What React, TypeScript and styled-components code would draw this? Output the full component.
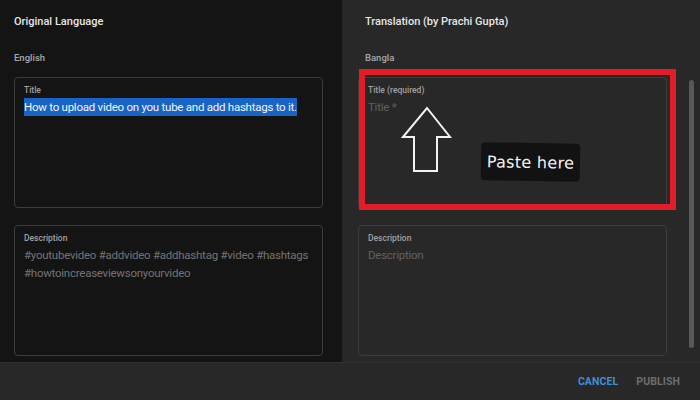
import React from 'react';
import styled, { createGlobalStyle } from 'styled-components';

/**
 * Global
 */
const GlobalStyle = createGlobalStyle`
    html, body {
        margin: 0;
        padding: 0;
        background: #282828;
    }
    body {
        font-family: Roboto, "Noto Sans", Arial, sans-serif;
    }
`;

/**
 * Styled Components
 */
const Page = styled.div`
    width: 700px;
    height: 400px;
    display: flex;
    flex-direction: column;
    overflow: hidden;
`;

const Body = styled.div`
    flex: 0 0 362px;
    display: flex;
`;

const Panel = styled.div<{ $bg: string; $width?: number }>`
    position: relative;
    ${(p) => (p.$width ? `flex: 0 0 ${p.$width}px;` : 'flex: 1;')}
    background: ${(p) => p.$bg};
    padding-left: ${(p) => (p.$width ? 14 : 16)}px;
    box-sizing: border-box;
    display: flex;
    flex-direction: column;
`;

const Heading = styled.div<{ $indent?: number }>`
    margin: 14px 0 0 ${(p) => p.$indent || 0}px;
    font-size: 11px;
    line-height: 16px;
    font-weight: 500;
    color: #e6e6e6;
`;

const Language = styled.div<{ $indent?: number }>`
    margin: 22px 0 0 ${(p) => p.$indent || 0}px;
    font-size: 9.5px;
    line-height: 12px;
    font-weight: 500;
    color: #a8a8a8;
`;

const Field = styled.div`
    width: 309px;
    height: 131px;
    margin-top: 13px;
    box-sizing: border-box;
    border: 1px solid #3c3c3c;
    border-radius: 4px;
    padding: 6px 9px;

    & + & {
        margin-top: 17px;
    }
`;

const FieldLabel = styled.div`
    font-size: 8.5px;
    line-height: 12px;
    font-weight: 500;
    color: #a0a0a0;
`;

const FieldText = styled.div<{ $muted?: boolean }>`
    margin-top: 2px;
    font-size: 11.5px;
    line-height: 18px;
    letter-spacing: -0.25px;
    color: ${(p) => (p.$muted ? '#616161' : '#737373')};
`;

const Selected = styled.span`
    background: #1763c6;
    color: #f4f4f4;
    padding: 2px 0;
`;

const ScrollThumb = styled.div`
    position: absolute;
    right: 6px;
    top: 80px;
    width: 5px;
    height: 268px;
    border-radius: 3px;
    background: #585858;
`;

const Highlight = styled.div`
    position: absolute;
    left: 17px;
    top: 69px;
    width: 317px;
    height: 141px;
    box-sizing: border-box;
    border: 6px solid #e41c28;
`;

const Arrow = styled.svg`
    position: absolute;
    left: 59px;
    top: 106px;
`;

const PasteTag = styled.div`
    position: absolute;
    left: 139px;
    top: 143px;
    width: 99px;
    height: 38px;
    border-radius: 4px;
    background: #121212;
    transform: rotate(1deg);
    display: flex;
    align-items: center;
    justify-content: center;
    font-family: "DejaVu Sans", sans-serif;
    font-size: 16px;
    color: #f2f2f2;
    letter-spacing: 0.3px;
`;

const Footer = styled.div`
    flex: 1;
    background: #282828;
    border-top: 1px solid #303030;
    display: flex;
    align-items: center;
    justify-content: flex-end;
    gap: 18px;
    padding-right: 20px;
`;

const Action = styled.div<{ $primary?: boolean }>`
    font-size: 10.5px;
    font-weight: 700;
    letter-spacing: 0.1px;
    color: ${(p) => (p.$primary ? '#3e8fd6' : '#6e6e6e')};
`;

/**
 * Main Component
 */
const App = () => {
    return (
        <Page>
            <GlobalStyle />
            <Body>
                <Panel $bg="#141414" $width={342}>
                    <Heading>Original Language</Heading>
                    <Language>English</Language>
                    <Field>
                        <FieldLabel>Title</FieldLabel>
                        <FieldText>
                            <Selected>How to upload video on you tube and add hashtags to it.</Selected>
                        </FieldText>
                    </Field>
                    <Field>
                        <FieldLabel>Description</FieldLabel>
                        <FieldText>
                            #youtubevideo #addvideo #addhashtag #video #hashtags
                            #howtoincreaseviewsonyourvideo
                        </FieldText>
                    </Field>
                </Panel>
                <Panel $bg="#282828">
                    <Heading $indent={7}>Translation (by Prachi Gupta)</Heading>
                    <Language $indent={7}>Bangla</Language>
                    <Field>
                        <FieldLabel>Title (required)</FieldLabel>
                        <FieldText $muted>Title *</FieldText>
                    </Field>
                    <Field>
                        <FieldLabel>Description</FieldLabel>
                        <FieldText $muted>Description</FieldText>
                    </Field>

                    <Highlight />
                    <Arrow width="52" height="68" viewBox="0 0 52 68">
                        <path
                            d="M26 2 L49 31 L36 31 L36 65 L13 65 L13 31 L2 31 Z"
                            fill="none"
                            stroke="#f2f2f2"
                            strokeWidth="2"
                            strokeLinejoin="miter"
                        />
                    </Arrow>
                    <PasteTag>Paste here</PasteTag>
                    <ScrollThumb />
                </Panel>
            </Body>
            <Footer>
                <Action $primary>CANCEL</Action>
                <Action>PUBLISH</Action>
            </Footer>
        </Page>
    );
};

export default App;
